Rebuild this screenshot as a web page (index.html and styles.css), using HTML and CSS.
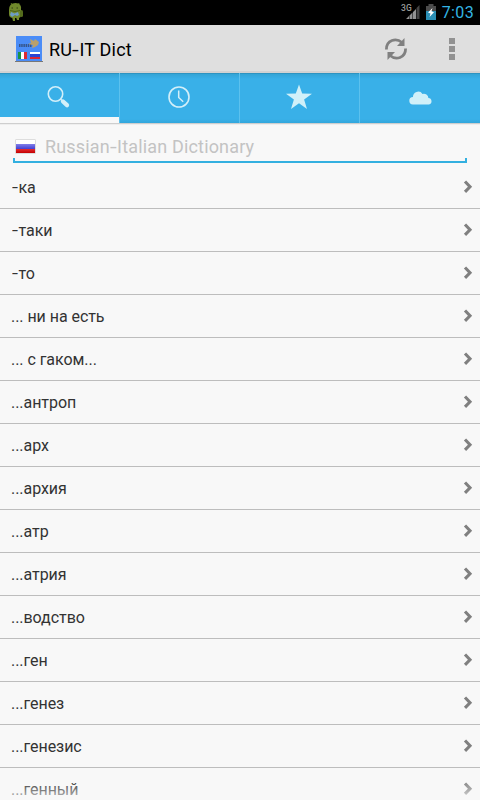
FILE: index.html
```html
<!DOCTYPE html>
<html lang="en">
<head>
<meta charset="utf-8">
<title>RU-IT Dict</title>
<link rel="stylesheet" href="styles.css">
</head>
<body>
<div class="status">
  <svg class="droid" width="16" height="20" viewBox="0 0 16 20">
    <path d="M3 1l2 3M11 1l-1 3" stroke="#5d7421" stroke-width="1"/>
    <path d="M1 8q0-7 6.500-7T13 8v5q0 3-3 3H5q-4 0-4-4z" fill="#71892b"/>
    <rect x="12" y="8" width="3" height="7" rx="1.500" fill="#546b1c"/>
    <path d="M4 15h3v4H5zM8 15h3v3H9z" fill="#71892b"/>
    <path d="M2 8.500q5 2 10 0" stroke="#4c611a" fill="none"/>
    <path d="M3 10l3.500 1.500L10 10l1 3-2 1-2-1-3 2-2-2z" fill="#6d9cc4"/>
    <path d="M3.500 6h1.500M8.500 6H10" stroke="#333f19"/>
  </svg>
  <div class="status-right">
    <span class="net">3G</span>
    <svg class="signal" width="14" height="16" viewBox="0 0 14 16">
      <path d="M0 15L3 12v3zM3.500 11.500L6.500 8.500V15h-3zM7 8l3-3v10H7z" fill="#929292"/>
      <path d="M10.500 4L13.500 1v14h-3z" fill="#444"/>
    </svg>
    <svg class="battery" width="10" height="16" viewBox="0 0 10 16">
      <path d="M2.500 0h5v2H10v5H0V2h2.500z" fill="#4b4b4b"/>
      <path d="M0 7h10v9H0z" fill="#2b8fb5"/>
      <path d="M6.500 4L2 8.500l2.500 1-1 3.500L8 8.200l-2.500-1z" fill="#fff"/>
    </svg>
    <span class="time">7:03</span>
  </div>
</div>
<header class="bar">
  <svg class="logo" width="28" height="28" viewBox="0 0 28 28">
    <path d="M1 1h26v25H1z" fill="#4a8cf7"/>
    <path d="M0 26h28v1H0z" fill="#777"/>
    <path d="M4 10.500h13" stroke="#35568c" stroke-width="3" stroke-dasharray="1.500 .7"/>
    <path d="M15 4l4 2 1-2 4 3-1 3-3 2-3 1 1-3-5-1 3-1z" fill="#b9a06b"/>
    <path d="M3 17h3v7H3z" fill="#189247"/><path d="M6 17h3v7H6z" fill="#fff"/><path d="M9 17h3v7H9z" fill="#dd2933"/>
    <path d="M15 17h10v2H15z" fill="#fff"/><path d="M15 19h10v3H15z" fill="#2b45d5"/><path d="M15 22h10v2H15z" fill="#d82636"/>
  </svg>
  <h1 class="title">RU<span class="dash">-</span>IT Dict</h1>
  <svg class="refresh" width="24" height="24" viewBox="0 0 24 24">
    <g fill="none" stroke="#808080" stroke-width="2.800"><path d="M2.400 12.500C2.400 3 12 .5 18 5.500"/><path d="M21.600 11.500C21.600 21 12 23.500 6 18.500"/></g>
    <path d="M20.500 1v8H13zM3.500 23v-8H11z" fill="#808080"/>
  </svg>
  <svg class="more" width="6" height="22" viewBox="0 0 6 22"><path d="M0 0h6v6H0zM0 8h6v6H0zM0 16h6v6H0z" fill="#929292"/></svg>
</header>
<nav class="tabs">
  <div class="tab active">
    <svg width="24" height="24" viewBox="0 0 24 24"><circle cx="8.500" cy="9" r="7.200" fill="none" stroke="#d3eff9" stroke-width="1.600"/><path d="M13.500 14l2 2" stroke="#d3eff9" stroke-width="1.500"/><path d="M16 16.500l4 3.700" stroke="#d3eff9" stroke-width="4.300" stroke-linecap="round"/></svg>
  </div>
  <div class="tab">
    <svg width="24" height="24" viewBox="0 0 24 24"><circle cx="12" cy="12" r="10" fill="none" stroke="#d3eff9" stroke-width="1.600"/><path d="M11.700 5.500v7l4.500 4.300" fill="none" stroke="#d3eff9" stroke-width="1.500"/></svg>
  </div>
  <div class="tab">
    <svg width="28" height="28" viewBox="0 0 28 28"><path d="M14 1.500l3.200 9 9.800.2-7.900 5.800 2.900 9.500-8-5.700L6 26l2.900-9.500L1 10.700l9.800-.2z" fill="#d0f0f9"/></svg>
  </div>
  <div class="tab">
    <svg width="24" height="24" viewBox="0 0 24 24"><path d="M4 18.500a3.700 3.700 0 0 1 0-7.400 5.200 5.200 0 0 1 9.500-3.200 4.500 4.500 0 0 1 5.900 4.100 3.300 3.300 0 0 1 .6 6.500z" fill="#d0f0f9"/></svg>
  </div>
</nav>
<div class="search">
  <div class="field">
    <span class="flag"></span>
    <span class="hint">Russian<span class="dash">-</span>Italian Dictionary</span>
  </div>
</div>
<ul class="list">
  <li><span><span class="dash">-</span>ка</span></li>
  <li><span><span class="dash">-</span>таки</span></li>
  <li><span><span class="dash">-</span>то</span></li>
  <li class="dots">... ни на есть</li>
  <li class="dots">... с гаком...</li>
  <li class="dots">...антроп</li>
  <li class="dots">...арх</li>
  <li class="dots">...архия</li>
  <li class="dots">...атр</li>
  <li class="dots">...атрия</li>
  <li class="dots">...водство</li>
  <li class="dots">...ген</li>
  <li class="dots">...генез</li>
  <li class="dots">...генезис</li>
  <li class="dots">...генный</li>
</ul>
<div class="fade"></div>
<script src="arrows.js"></script>
</body>
</html>
```
FILE: styles.css
```css
* { box-sizing: border-box; }
body {
  margin: 0;
  width: 480px;
  height: 800px;
  overflow: hidden;
  position: relative;
  display: flex;
  flex-direction: column;
  background: #f8f8f8;
  font-family: Roboto, "Noto Sans", sans-serif;
  color: #333;
}
svg { display: block; flex: none; }
.dash { display: inline-block; transform: scaleX(1.35); transform-origin: 0 50%; margin-right: 2px; }
.status {
  height: 25px;
  flex: none;
  display: flex;
  justify-content: space-between;
  background: #000;
  padding: 0 6px 0 8px;
}
.droid { margin-top: 2px; }
.status-right { display: flex; }
.net { font-size: 8.5px; line-height: 16px; color: #999; font-weight: 500; margin-right: -6px; }
.signal { margin: 4px 6px 0 0; }
.battery { margin: 4px 6px 0 0; }
.time { font-size: 16px; line-height: 25px; color: #33b5e5; letter-spacing: .35px; }
.bar {
  height: 48px;
  flex: none;
  display: flex;
  align-items: center;
  background: #dfdfdf;
  border-bottom: 2px solid #d2d2d2;
  padding: 2px 25px 0 15px;
}
.title { margin: 0 auto 0 6px; font-size: 18px; font-weight: 400; color: #000; letter-spacing: .22px; }
.refresh { margin-right: 41px; }
.tabs {
  height: 51px;
  flex: none;
  display: grid;
  grid-template-columns: repeat(4, 1fr);
  background: linear-gradient(#2783ad 0, #33a4d6 1px, #39b0e8 6px, #39b0e8 46px, #32a6dc 50px);
  border-bottom: 1px solid #cecece;
}
.tab {
  display: flex;
  align-items: center;
  justify-content: center;
  border-right: 1px solid #5cc1ee;
  padding: 0 1px 2px 0;
}
.tab:last-child { border-right: 0; padding: 0 0 1px 1px; }
.active {
  padding: 0 1px 2px 0;
  background: linear-gradient(#f8f8f8, #f8f8f8) 0 100% / 100% 6px no-repeat;
}
.search { height: 42px; flex: none; padding: 8px 13px 0; border-top: 1px solid #eee; }
.field {
  height: 30px;
  display: flex;
  align-items: center;
  padding: 0 2px 3px;
  background:
    linear-gradient(#33b0e0, #33b0e0) 0 100% / 100% 2px no-repeat,
    linear-gradient(#33b0e0, #33b0e0) 0 100% / 2px 5px no-repeat,
    linear-gradient(#33b0e0, #33b0e0) 100% 100% / 2px 5px no-repeat;
}
.flag {
  width: 21px;
  height: 15px;
  margin-right: 9px;
  border: 1px solid #ddd;
  border-radius: 1px;
  background: linear-gradient(#fff 4px, #817ee8 4px, #413fd3 9px, #e32c30 9px, #c50000);
}
.hint { font-size: 18px; color: #c3c3c3; letter-spacing: .17px; }
.list { margin: 0; padding: 0; list-style: none; }
.list li {
  height: 43px;
  display: flex;
  align-items: center;
  justify-content: space-between;
  border-bottom: 1px solid #bdbdbd;
  padding: 0 7px 0 12px;
  font-size: 16px;
}
.list .dots { padding-left: 11px; letter-spacing: -.05px; }
.chevron { margin-bottom: 1px; }
.fade {
  position: absolute;
  left: 0;
  right: 0;
  bottom: 0;
  height: 20px;
  background: linear-gradient(rgba(248,248,248,0), rgba(248,248,248,.75));
}
```
FILE: arrows.js
```js
document.querySelectorAll('.list li').forEach(function (row) {
  row.insertAdjacentHTML('beforeend',
    '<svg class="chevron" width="10" height="14" viewBox="0 0 10 14"><path d="M2 1.500l5 5.200-5 5.200" fill="none" stroke="#808080" stroke-width="3.100"/></svg>');
});
```
